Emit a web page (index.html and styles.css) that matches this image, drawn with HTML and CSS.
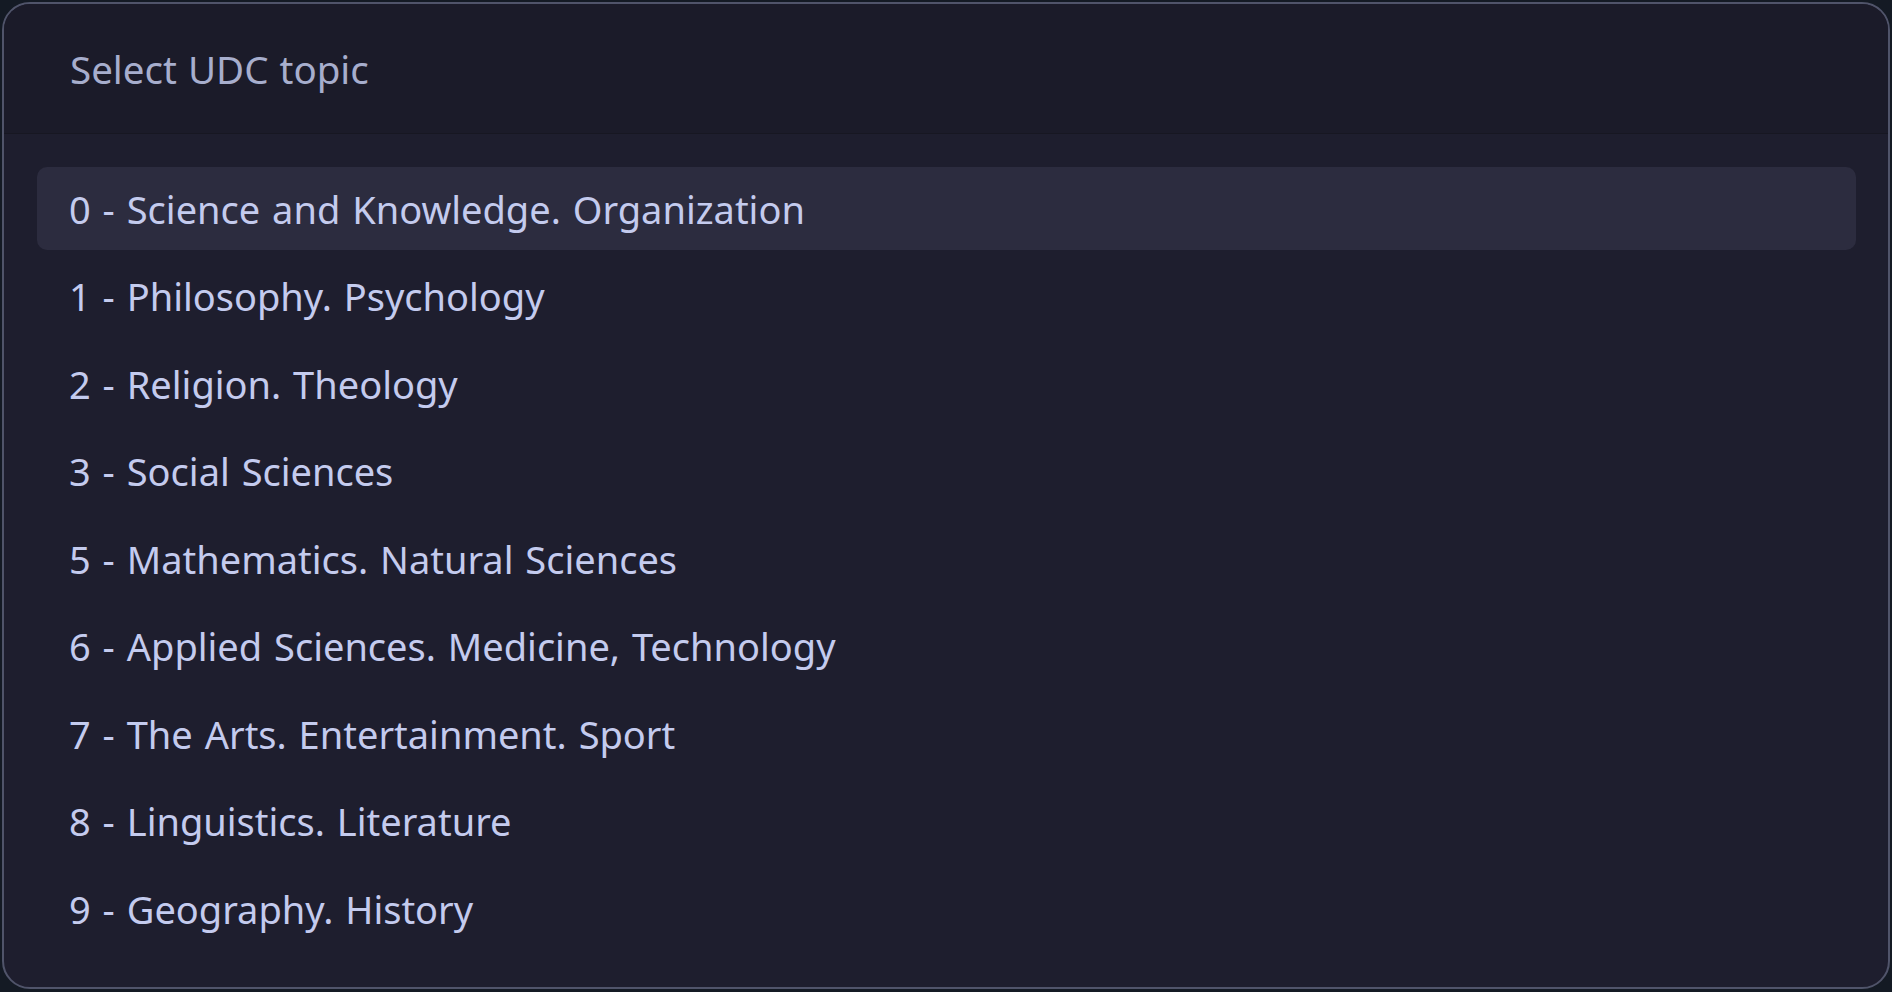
FILE: index.html
```html
<!DOCTYPE html>
<html lang="en">
<head>
    <meta charset="UTF-8">
    <meta name="viewport" content="width=device-width, initial-scale=1.0">
    <title>Select UDC topic</title>
    <link rel="stylesheet" href="styles.css">
</head>
<body>
    <div class="picker">
        <div class="picker-header">Select UDC topic</div>
        <ul class="topic-list">
            <li class="topic active">0 - Science and Knowledge. Organization</li>
            <li class="topic">1 - Philosophy. Psychology</li>
            <li class="topic">2 - Religion. Theology</li>
            <li class="topic">3 - Social Sciences</li>
            <li class="topic">5 - Mathematics. Natural Sciences</li>
            <li class="topic">6 - Applied Sciences. Medicine, Technology</li>
            <li class="topic">7 - The Arts. Entertainment. Sport</li>
            <li class="topic">8 - Linguistics. Literature</li>
            <li class="topic">9 - Geography. History</li>
        </ul>
    </div>
</body>
</html>
```

FILE: styles.css
```css
body {
    margin: 0;
    background: #141a24;
    font-family: "Noto Sans", "Open Sans", sans-serif;
}
.picker {
    margin: 2px;
    border: 2px solid #50546a;
    border-radius: 28px;
    background: #1e1e2e;
    overflow: hidden;
}
.picker-header {
    height: 129px;
    display: flex;
    align-items: center;
    padding-left: 66px;
    background: #1b1b29;
    border-bottom: 1px solid #171722;
    color: #a7aecd;
    font-size: 38.5px;
    word-spacing: 1px;
}
.topic-list {
    list-style: none;
    margin: 0;
    padding: 33px 32px 37px 33px;
    display: flex;
    flex-direction: column;
    gap: 4.5px;
}
.topic {
    height: 83px;
    display: flex;
    align-items: center;
    padding-left: 32px;
    border-radius: 10px;
    color: #c4cbee;
    font-size: 38px;
    word-spacing: 2px;
}
.topic.active {
    background: #2c2c3f;
}
```
